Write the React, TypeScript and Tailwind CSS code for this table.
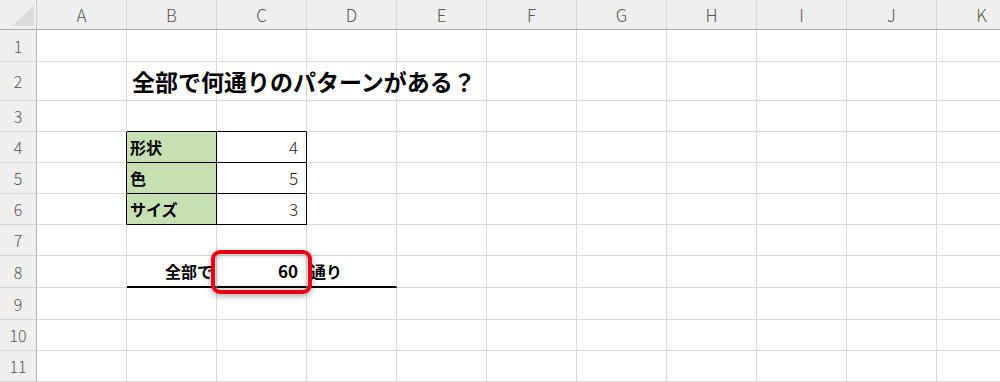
const cols = ["A", "B", "C", "D", "E", "F", "G", "H", "I", "J", "K"];
const rowHeights = ["h-[32px]", "h-[39px]", "h-[31px]", "h-[31px]", "h-[31px]", "h-[31px]", "h-[31px]", "h-[32px]", "h-[32px]", "h-[31px]", "h-[31px]"];

const jp = { fontFamily: '"Noto Sans CJK JP", "Noto Sans", sans-serif' };

type CellProps = { row: number; col: number };

function Cell({ row, col }: CellProps) {
  const c = cols[col];
  // borders: default light grid lines, black for the little table and the row 8 underline
  let right = "border-r border-r-[#dadada]";
  let bottom = "border-b border-b-[#dadada]";
  let bg = "";
  let content: React.ReactNode = null;

  const inTable = row >= 4 && row <= 6;
  if (inTable && (c === "A" || c === "B" || c === "C")) right = "border-r border-r-black";
  if ((c === "B" || c === "C") && row >= 3 && row <= 6) bottom = "border-b border-b-black";
  if (row === 8 && (c === "B" || c === "C" || c === "D")) bottom = "border-b-2 border-b-black";

  if (row === 2 && c === "B") {
    content = (
      <span className="relative z-10 pl-[5px] text-[23px] font-bold whitespace-nowrap text-black">
        全部で何通りのパターンがある？
      </span>
    );
  }
  if (inTable && c === "B") {
    bg = "bg-[#c6e0b4]";
    const label = ["形状", "色", "サイズ"][row - 4];
    content = <span className="pl-[3px] text-[16px] font-bold text-black">{label}</span>;
  }
  if (inTable && c === "C") {
    const n = [4, 5, 3][row - 4];
    content = <span className="ml-auto pr-[8px] text-[17px] font-light text-[#222]">{n}</span>;
  }
  if (row === 8 && c === "B") {
    content = <span className="ml-auto pr-[3px] text-[16px] font-bold text-black">全部で</span>;
  }
  if (row === 8 && c === "C") {
    content = <span className="ml-auto pr-[8px] text-[17px] font-bold text-black">60</span>;
  }
  if (row === 8 && c === "D") {
    content = <span className="pl-[3px] text-[16px] font-bold text-black">通り</span>;
  }

  return (
    <div className={`w-[90px] shrink-0 flex items-center ${right} ${bottom} ${bg}`}>
      {content}
    </div>
  );
}

export default function App() {
  return (
    <div className="relative w-[1000px] h-[382px] overflow-hidden bg-white" style={jp}>
      {/* column headers */}
      <div className="flex h-[30px] bg-[#efefef] border-b border-b-[#a9a9a9]">
        <div className="w-[37px] shrink-0 border-r border-r-[#c8c8c8] relative">
          <svg className="absolute left-[12px] top-[5px]" width="22" height="21" viewBox="0 0 22 21">
            <polygon points="0,21 22,0 22,21" fill="#dcdcdc" />
          </svg>
        </div>
        {cols.map((c) => (
          <div
            key={c}
            className="w-[90px] shrink-0 flex items-center justify-center border-r border-r-[#d6d6d6] text-[17px] font-light text-[#555]"
          >
            {c}
          </div>
        ))}
      </div>

      {/* rows */}
      {rowHeights.map((h, i) => {
        const row = i + 1;
        return (
          <div key={row} className={`flex ${h}`}>
            <div className="w-[37px] shrink-0 flex items-center justify-center bg-[#efefef] border-r border-r-[#b4b4b4] border-b border-b-[#d6d6d6] text-[16px] font-light text-[#555]">
              {row}
            </div>
            {cols.map((c, ci) => (
              <Cell key={c} row={row} col={ci} />
            ))}
          </div>
        );
      })}

      {/* red highlight frame around C8 */}
      <div className="absolute left-[211px] top-[250px] w-[101px] h-[44px] rounded-[9px] border-4 border-[#e60012] shadow-[0_2px_6px_rgba(0,0,0,0.35),inset_0_0_6px_rgba(0,0,0,0.35)]" />
    </div>
  );
}
